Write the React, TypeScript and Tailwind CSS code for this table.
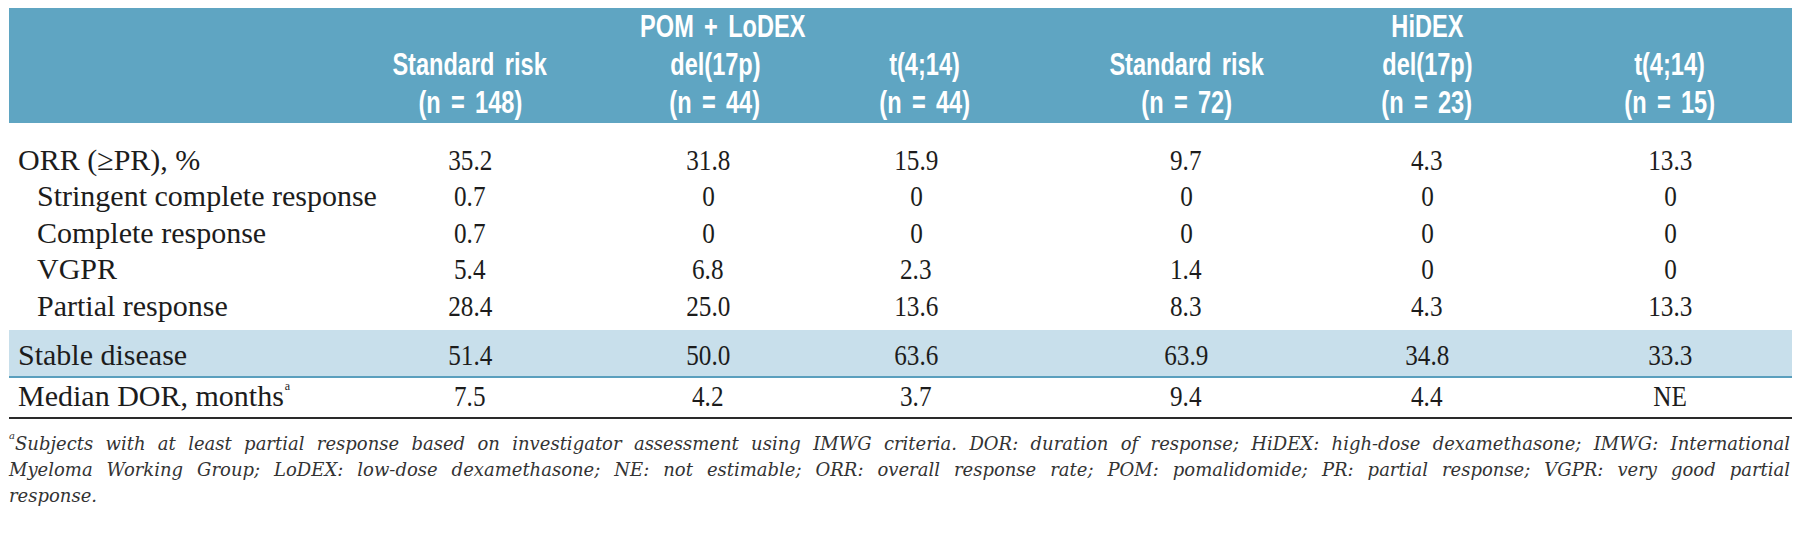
import React from "react";

const GRID = "grid grid-cols-[340px_242px_225px_237px_253px_242px_244px]";
const headPad = ["", "", "pl-[23px]", "pr-[19px]", "pl-[15px]", "", ""];
const dataPad = ["", "", "pl-[9px]", "pr-[37px]", "pl-[13px]", "", ""];

const headers: [string, string, string][] = [
  ["", "Standard risk", "(n = 148)"],
  ["POM + LoDEX", "del(17p)", "(n = 44)"],
  ["", "t(4;14)", "(n = 44)"],
  ["", "Standard risk", "(n = 72)"],
  ["HiDEX", "del(17p)", "(n = 23)"],
  ["", "t(4;14)", "(n = 15)"],
];

type Row = { label: React.ReactNode; indent?: boolean; vals: string[] };

const rows: Row[] = [
  { label: "ORR (≥PR), %", vals: ["35.2", "31.8", "15.9", "9.7", "4.3", "13.3"] },
  { label: "Stringent complete response", indent: true, vals: ["0.7", "0", "0", "0", "0", "0"] },
  { label: "Complete response", indent: true, vals: ["0.7", "0", "0", "0", "0", "0"] },
  { label: "VGPR", indent: true, vals: ["5.4", "6.8", "2.3", "1.4", "0", "0"] },
  { label: "Partial response", indent: true, vals: ["28.4", "25.0", "13.6", "8.3", "4.3", "13.3"] },
];

function HeaderLine({ text }: { text: string }) {
  return (
    <div className="h-[38px] leading-[38px] whitespace-nowrap">
      {text ? <span className="inline-block scale-x-[0.76] [word-spacing:5px]">{text}</span> : "\u00a0"}
    </div>
  );
}

function Num({ v }: { v: string }) {
  return <span className="inline-block scale-x-[0.84]">{v}</span>;
}

function DataRow({ row }: { row: Row }) {
  return (
    <div className={GRID}>
      <div className={`h-[36.5px] leading-[36.5px] whitespace-nowrap ${row.indent ? "pl-[28px]" : "pl-[9px]"}`}>
        {row.label}
      </div>
      {row.vals.map((v, i) => (
        <div key={i} className={`h-[36.5px] leading-[36.5px] text-center ${dataPad[i + 1]}`}>
          <Num v={v} />
        </div>
      ))}
    </div>
  );
}

export default function App() {
  return (
    <div className="w-[1800px] h-[534px] bg-white overflow-hidden pl-[9px] pt-[8px]">
      <div className="w-[1783px] font-['Liberation_Serif',serif] text-[30px] text-[#1c1c1c]">
        {/* Header */}
        <div className={`${GRID} bg-[#5fa5c2] h-[115px] text-white font-['Liberation_Sans',Arial,sans-serif] font-bold text-[31px]`}>
          <div />
          {headers.map((h, i) => (
            <div key={i} className={`flex flex-col text-center ${headPad[i + 1]}`}>
              <HeaderLine text={h[0]} />
              <HeaderLine text={h[1]} />
              <HeaderLine text={h[2]} />
            </div>
          ))}
        </div>

        {/* Body */}
        <div className="mt-[18.5px]">
          {rows.map((r, i) => (
            <DataRow key={i} row={r} />
          ))}
        </div>

        {/* Stable disease band */}
        <div className="mt-[6px] bg-[#c8dfeb] border-b-2 border-[#5a9fbd] pt-[6.5px] pb-[3px]">
          <DataRow row={{ label: "Stable disease", vals: ["51.4", "50.0", "63.6", "63.9", "34.8", "33.3"] }} />
        </div>

        {/* Median DOR */}
        <div className="border-b-2 border-[#2a2a2a] pt-[0px] pb-[2px]">
          <DataRow
            row={{
              label: (
                <>
                  Median DOR, months<sup className="text-[12px] align-[10px] ml-[1px]">a</sup>
                </>
              ),
              vals: ["7.5", "4.2", "3.7", "9.4", "4.4", "NE"],
            }}
          />
        </div>

        {/* Footnote */}
        <div className="mt-[12px] font-['DejaVu_Serif',serif] italic text-[18px] leading-[26px] text-[#333] pr-[2px]">
          <div className="text-justify [text-align-last:justify]">
            <sup className="text-[10px] align-[6px]">a</sup>Subjects with at least partial response based on investigator assessment using IMWG criteria. DOR: duration of response; HiDEX: high-dose dexamethasone; IMWG: International
          </div>
          <div className="text-justify [text-align-last:justify]">
            Myeloma Working Group; LoDEX: low-dose dexamethasone; NE: not estimable; ORR: overall response rate; POM: pomalidomide; PR: partial response; VGPR: very good partial
          </div>
          <div>response.</div>
        </div>
      </div>
    </div>
  );
}
